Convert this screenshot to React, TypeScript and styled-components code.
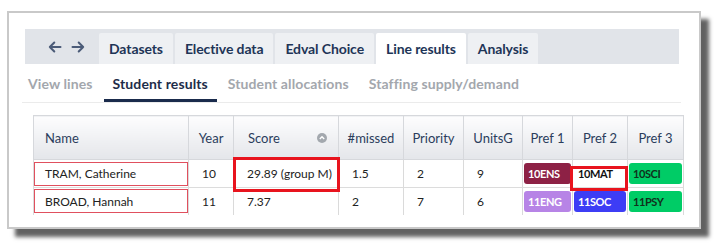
import React from 'react'
import styled, { createGlobalStyle } from 'styled-components'

const GlobalStyle = createGlobalStyle`
  html, body {
    margin: 0;
    padding: 0;
    background: #ffffff;
  }
  body {
    font-family: Lato, "Noto Sans", sans-serif;
    width: 714px;
    height: 244px;
    overflow: hidden;
  }
`

const Frame = styled.div`
  box-sizing: border-box;
  margin: 11px 0 0 7px;
  width: 694px;
  height: 218px;
  border: 2px solid #c9c9c9;
  background: #ffffff;
  box-shadow: 8px 8px 4px rgba(0, 0, 0, 0.62);
  padding: 16px 0 0 16px;
`

const TabBar = styled.div`
  display: flex;
  align-items: flex-end;
  width: 654px;
  height: 35px;
  background: #e1e4e9;
`

const History = styled.div`
  display: flex;
  align-items: center;
  gap: 9px;
  height: 100%;
  width: 74px;
  box-sizing: border-box;
  padding: 0 0 0 23px;
  color: #4b5b78;
`

const Tab = styled.div<{ $active?: boolean }>`
  display: flex;
  align-items: center;
  height: 31px;
  padding: 0 10px;
  margin-right: 2px;
  border-radius: 2px 2px 0 0;
  background: ${p => (p.$active ? '#ffffff' : '#eef0f3')};
  color: #1e3557;
  font-size: 14px;
  font-weight: 700;
  letter-spacing: -0.1px;
`

const SubNav = styled.div`
  display: flex;
  width: 659px;
  height: 38px;
  border-bottom: 1px solid #ebebeb;
  gap: 2px;
  margin-left: -3px;
`

const SubTab = styled.div<{ $active?: boolean }>`
  display: flex;
  align-items: center;
  box-sizing: border-box;
  padding: 3px 9px 0;
  font-size: 14px;
  font-weight: 700;
  letter-spacing: 0.1px;
  color: ${p => (p.$active ? '#1e2d4a' : '#a3a7ad')};
  border-bottom: 3px solid ${p => (p.$active ? '#1a2b4c' : 'transparent')};
  &:first-child {
    padding-left: 6px;
  }
`

const Grid = styled.table`
  margin: 12px 0 0 8px;
  border-collapse: collapse;
  table-layout: fixed;
  width: 650px;
  font-size: 12px;
`

const Head = styled.th<{ $left?: boolean; $pad?: number }>`
  position: relative;
  height: 43px;
  padding: 0 0 0 ${p => (p.$pad ?? 0)}px;
  text-align: ${p => (p.$left ? 'left' : 'center')};
  font-weight: 400;
  font-size: 13px;
  color: #2b3d5c;
  background: linear-gradient(#fdfdfe, #e4e6ea);
  border: 1px solid #d6d8dc;
`

const SortIcon = styled.span`
  position: absolute;
  right: 11px;
  top: 17px;
  display: flex;
`

const Row = styled.tr<{ $h: number }>`
  height: ${p => p.$h}px;
`

const Cell = styled.td`
  position: relative;
  padding: 0 0 0 13px;
  color: #222222;
  font-size: 12px;
  border-right: 1px solid #dadada;
  border-bottom: 1px solid #dcdcdc;
  border-left: 1px solid #dadada;
  tr:last-child > & {
    border-bottom: none;
  }
`

const NameCell = styled(Cell)`
  padding: 1px 0;
`

const NameBox = styled.div`
  display: flex;
  align-items: center;
  height: 22px;
  padding-left: 10px;
  border: 1px solid #e0505e;
`

const PrefCell = styled(Cell)`
  padding: 2px 1px;
`

const Chip = styled.div<{ $bg: string; $fg: string }>`
  display: flex;
  align-items: center;
  height: 21px;
  padding-left: 4px;
  border-radius: 3px;
  background: ${p => p.$bg};
  color: ${p => p.$fg};
  font-size: 11px;
  font-weight: 700;
  letter-spacing: -0.4px;
`

const Highlight = styled.span<{ $t: number; $r: number; $b: number; $l: number }>`
  position: absolute;
  top: ${p => p.$t}px;
  right: ${p => p.$r}px;
  bottom: ${p => p.$b}px;
  left: ${p => p.$l}px;
  border: 3px solid #e8141e;
  pointer-events: none;
`

const Arrow = ({ dir }: { dir: 'left' | 'right' }) => (
  <svg width="14" height="14" viewBox="0 0 14 14" fill="none" stroke="currentColor" strokeWidth="2" strokeLinecap="round" strokeLinejoin="round">
    {dir === 'left' ? (
      <path d="M12.5 7H1.8M6.3 2.5L1.8 7l4.5 4.5" />
    ) : (
      <path d="M1.5 7h10.7M7.7 2.5L12.2 7l-4.5 4.5" />
    )}
  </svg>
)

const prefs = [
  [
    { code: '10ENS', bg: '#8d2145', fg: '#ffffff' },
    { code: '10MAT', bg: '#ffffff', fg: '#111111', mark: true },
    { code: '10SCI', bg: '#00cc66', fg: '#10301c' },
  ],
  [
    { code: '11ENG', bg: '#b784e6', fg: '#ffffff' },
    { code: '11SOC', bg: '#3d3df5', fg: '#ffffff' },
    { code: '11PSY', bg: '#00cc66', fg: '#10301c' },
  ],
]

const students = [
  { name: 'TRAM, Catherine', year: 10, score: '29.89 (group M)', missed: '1.5', priority: 2, units: 9, mark: true },
  { name: 'BROAD, Hannah', year: 11, score: '7.37', missed: '2', priority: 7, units: 6, mark: false },
]

const App = () => {
  return (
    <>
      <GlobalStyle />
      <Frame>
        <TabBar>
          <History>
            <Arrow dir="left" />
            <Arrow dir="right" />
          </History>
          <Tab>Datasets</Tab>
          <Tab>Elective data</Tab>
          <Tab>Edval Choice</Tab>
          <Tab $active>Line results</Tab>
          <Tab>Analysis</Tab>
        </TabBar>
        <SubNav>
          <SubTab>View lines</SubTab>
          <SubTab $active>Student results</SubTab>
          <SubTab>Student allocations</SubTab>
          <SubTab>Staffing supply/demand</SubTab>
        </SubNav>
        <Grid>
          <colgroup>
            <col style={{ width: 155 }} />
            <col style={{ width: 45 }} />
            <col style={{ width: 105 }} />
            <col style={{ width: 65 }} />
            <col style={{ width: 60 }} />
            <col style={{ width: 59 }} />
            <col style={{ width: 50 }} />
            <col style={{ width: 55 }} />
            <col style={{ width: 56 }} />
          </colgroup>
          <thead>
            <tr>
              <Head $left $pad={11}>Name</Head>
              <Head>Year</Head>
              <Head $left $pad={14}>
                Score
                <SortIcon>
                  <svg width="10" height="10" viewBox="0 0 10 10">
                    <circle cx="5" cy="5" r="5" fill="#a3a8ae" />
                    <path d="M2.8 6L5 3.8 7.2 6" fill="none" stroke="#ffffff" strokeWidth="1.4" />
                  </svg>
                </SortIcon>
              </Head>
              <Head>#missed</Head>
              <Head>Priority</Head>
              <Head>UnitsG</Head>
              <Head>Pref 1</Head>
              <Head>Pref 2</Head>
              <Head>Pref 3</Head>
            </tr>
          </thead>
          <tbody>
            {students.map((s, i) => (
              <Row key={s.name} $h={i === 0 ? 28 : 27}>
                <NameCell>
                  <NameBox>{s.name}</NameBox>
                </NameCell>
                <Cell>{s.year}</Cell>
                <Cell>
                  {s.score}
                  {s.mark && <Highlight $t={-3} $r={-2} $b={-5} $l={-1} />}
                </Cell>
                <Cell>{s.missed}</Cell>
                <Cell>{s.priority}</Cell>
                <Cell>{s.units}</Cell>
                {prefs[i].map(p => (
                  <PrefCell key={p.code}>
                    <Chip $bg={p.bg} $fg={p.fg}>{p.code}</Chip>
                    {'mark' in p && p.mark && <Highlight $t={6} $r={-1} $b={-4} $l={-3} />}
                  </PrefCell>
                ))}
              </Row>
            ))}
          </tbody>
        </Grid>
      </Frame>
    </>
  )
}

export default App
